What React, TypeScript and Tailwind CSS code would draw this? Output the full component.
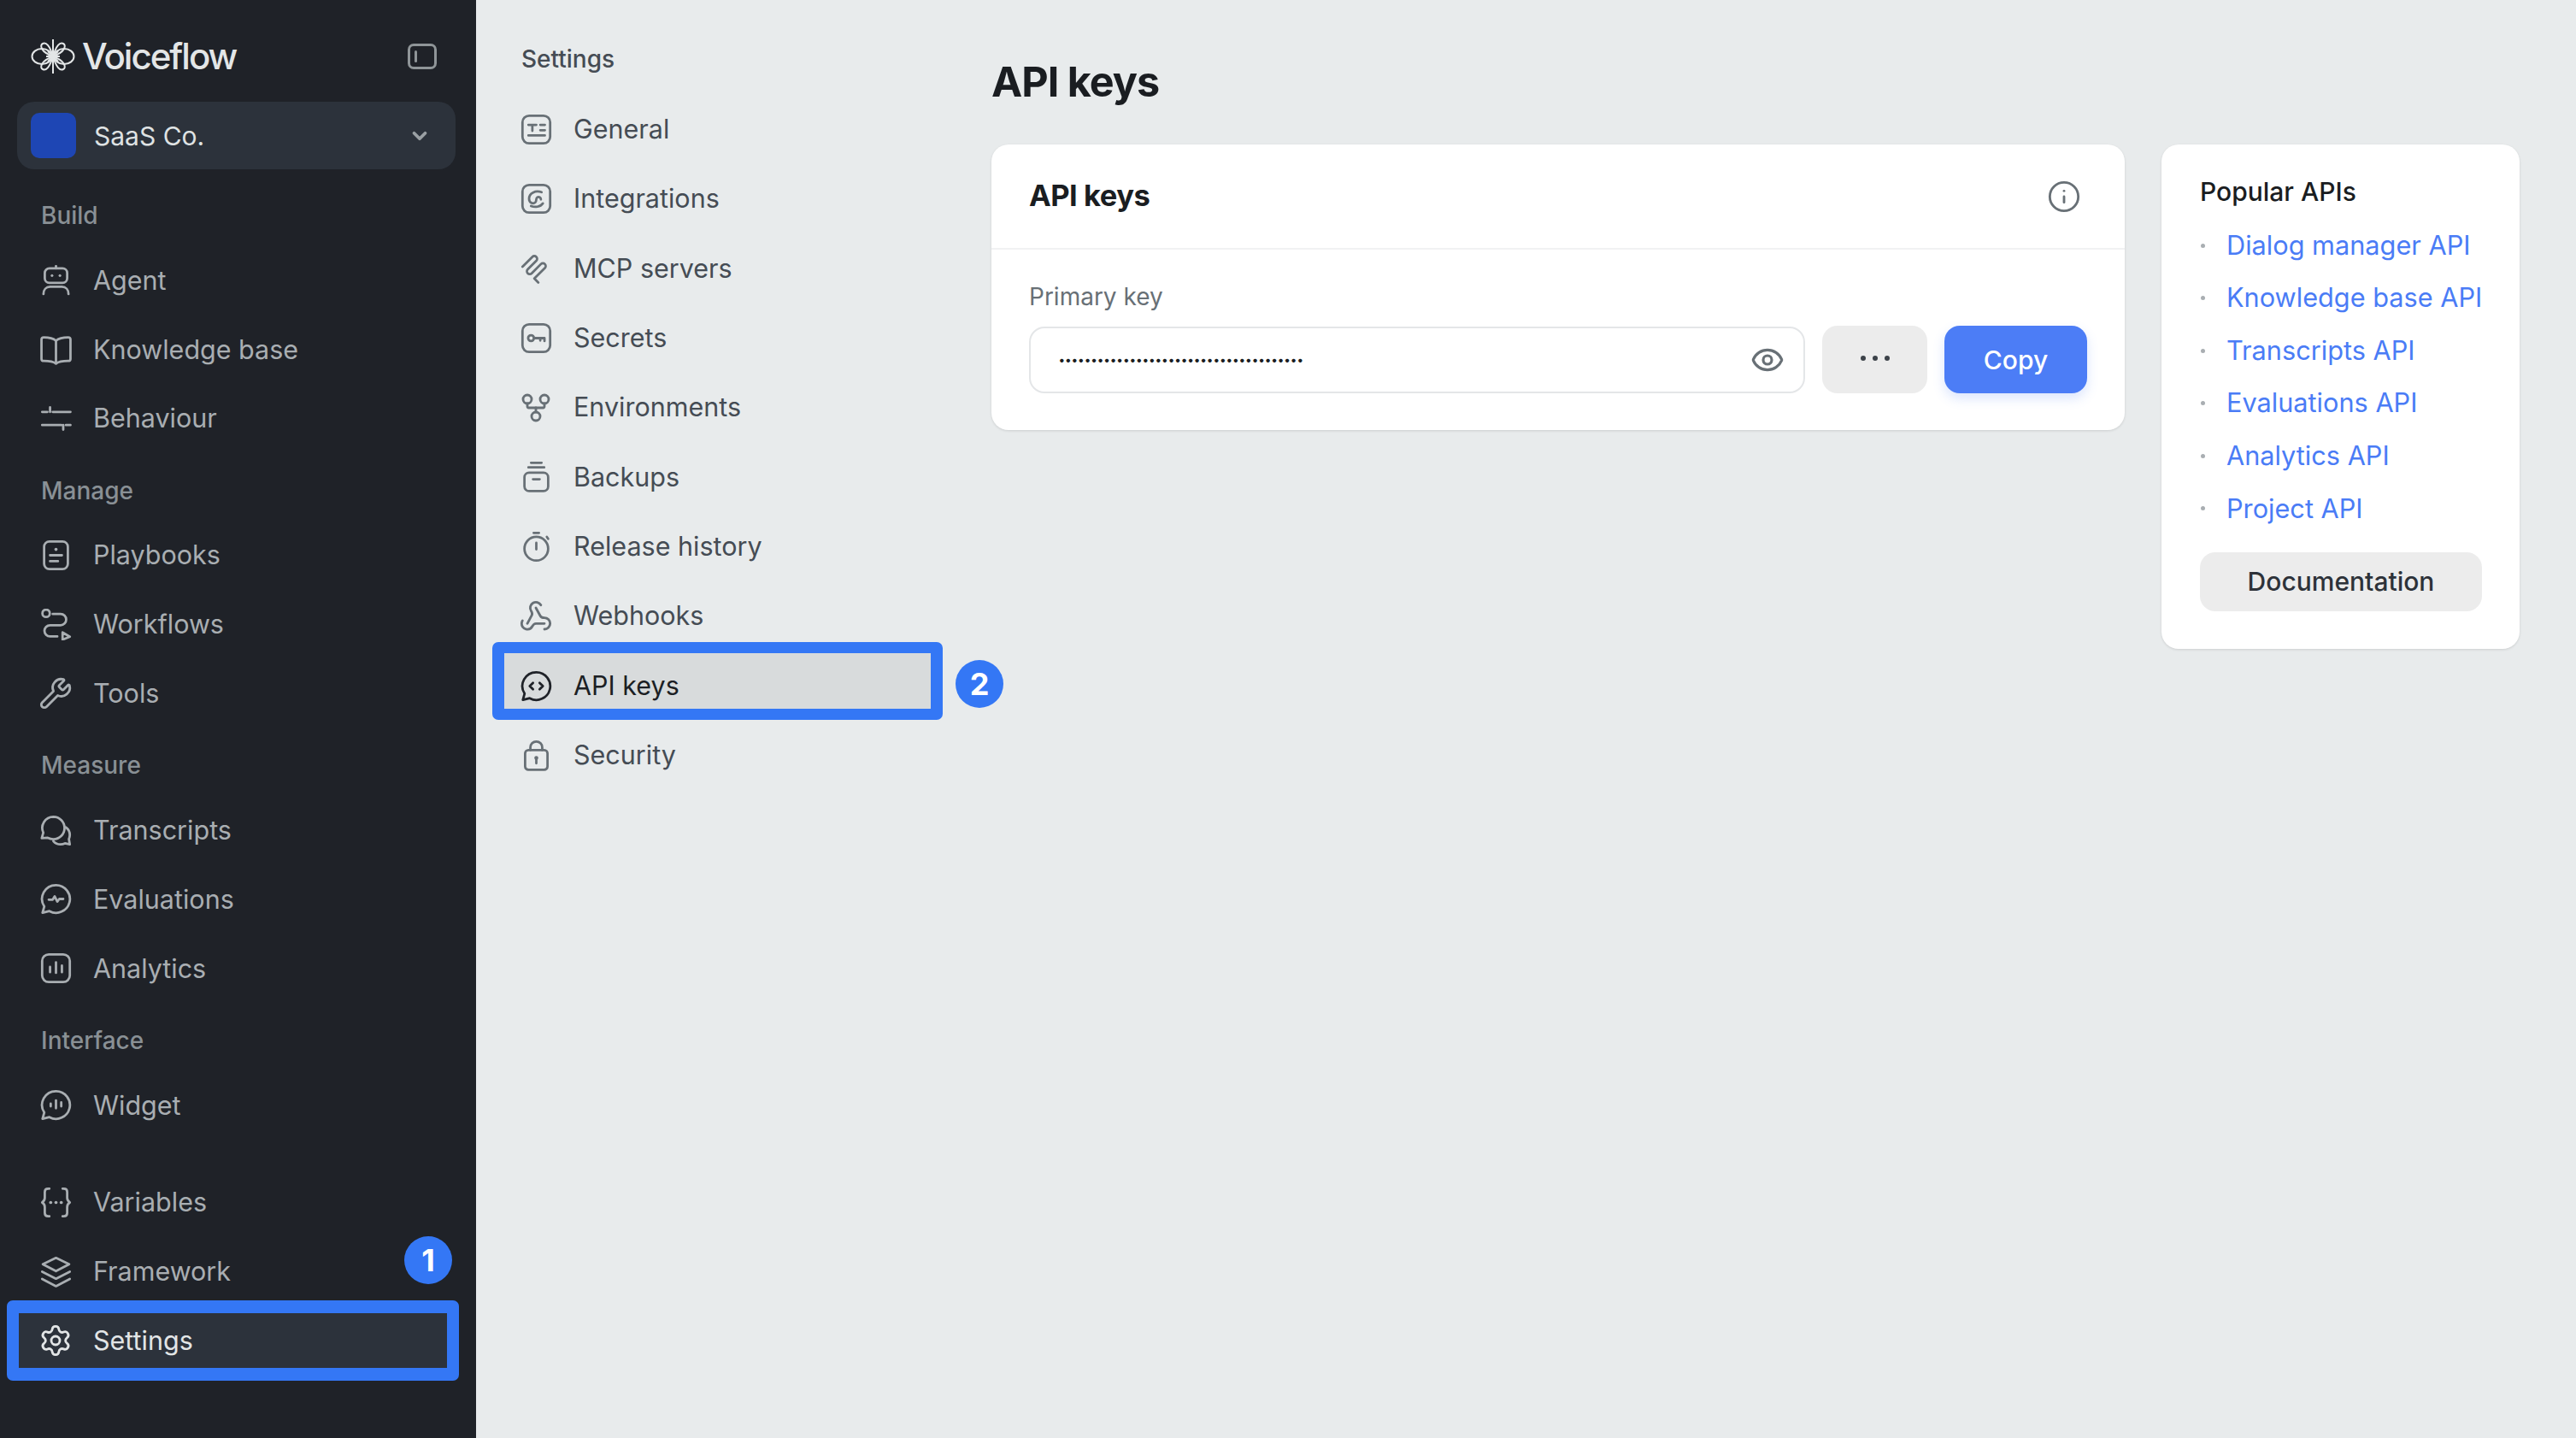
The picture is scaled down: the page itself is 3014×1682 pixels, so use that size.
import React from "react";
import { Wrench, Settings as Gear, GitFork, Webhook, Eye, Info, ChevronDown } from "lucide-react";

const S = ({ children }: { children: React.ReactNode }) => (
  <svg viewBox="0 0 24 24" fill="none" stroke="currentColor" strokeWidth={1.800} strokeLinecap="round" strokeLinejoin="round" className="w-[37px] h-[37px] -m-[1.500px] shrink-0">
    {children}
  </svg>
);
const Dot = ({ x, y, r = 1 }: { x: number; y: number; r?: number }) => <circle cx={x} cy={y} r={r} fill="currentColor" stroke="none" />;

const Agent = () => <S><rect x="3.500" y="2.500" width="17" height="11" rx="3.500" /><path d="M12 .8v1.700" /><Dot x={9} y={8} /><Dot x={15} y={8} /><path d="M2.500 22c0-3.200 2-5.500 5-5.500h9c3 0 5 2.300 5 5.500" /></S>;
const Book = () => <S><path d="M12 5.500C10 3.800 7 3 2.800 3 1.800 3 1 3.600 1 4.600v14.800c0 1 .8 1.500 1.800 1.500 4.200 0 7.200.5 9.200 2 2-1.500 5-2 9.200-2 1 0 1.800-.5 1.800-1.500V4.600c0-1-.8-1.600-1.800-1.600C17 3 14 3.800 12 5.500z" /><path d="M12 5.500V22" /></S>;
const Sliders = () => <S><path d="M1.500 7h4M9.500 7H23M7.500 3.500V7M1.500 17h14.500M19.500 17H23M17.500 17v3.500" /></S>;
const Playbook = () => <S><rect x="3" y="1.500" width="18" height="21" rx="4" /><Dot x={12} y={7.500} r={1.200} /><path d="M7.500 12h9M7.500 16.500h6" /></S>;
const Flow = () => <S><circle cx="4.500" cy="3.500" r="2.800" /><path d="M9.500 4h6a4.200 4.200 0 0 1 0 8.500H7.500a4.200 4.200 0 0 0 0 8.500h5.500" /><path d="M17 18l5.500 3.200L17 23.500z" /></S>;
const Bubbles = () => <S><path d="M10 1.500a8.500 8.500 0 0 1 8.500 8.500 8.500 8.500 0 0 1-8.500 8.500c-1.500 0-3-.4-4.200-1L1.200 17.800l1.200-4.200A8.500 8.500 0 0 1 10 1.500z" /><path d="M19.500 9.500c2 1.500 3 3.500 3 5.800 0 1.200-.3 2.200-.7 3.200l.7 4-3.700-.8c-1 .5-2 .8-3.300.8-2.200 0-4.200-1-5.500-2.500" /></S>;
const Pulse = () => <S><path d="M12 1.500a10.500 10.500 0 1 1-5 19.700L1.800 22.500l1.300-4.800A10.500 10.500 0 0 1 12 1.500z" /><path d="M6.500 12.500h3l1.500-2.500 2 4 1.500-2h3" /></S>;
const Chart = () => <S><rect x="1.500" y="1.500" width="21" height="21" rx="5" /><path d="M7.500 11v4M12 7.500v8M16.500 10v5" /></S>;
const Wave = () => <S><path d="M12 1.500a10.500 10.500 0 1 1-5 19.700L1.800 22.500l1.300-4.800A10.500 10.500 0 0 1 12 1.500z" /><path d="M8 11v2M12 8.500v6M16 10v3" /></S>;
const Braces = () => <S><path d="M7 1.500H6c-1.500 0-2.500 1-2.500 2.500v4.500c0 1.500-.8 2.800-2 3.500 1.200.7 2 2 2 3.500V20c0 1.500 1 2.500 2.500 2.500h1" /><path d="M17 1.500h1c1.500 0 2.500 1 2.500 2.500v4.500c0 1.500.8 2.800 2 3.500-1.200.7-2 2-2 3.500V20c0 1.500-1 2.500-2.500 2.500h-1" /><Dot x={8} y={12} r={1.200} /><Dot x={12} y={12} r={1.200} /><Dot x={16} y={12} r={1.200} /></S>;
const Stack = () => <S><path d="M12 1.500l10 4.800L12 11.500 2 6.300z" /><path d="M1.500 12l10.500 5.300L22.500 12" /><path d="M1.500 17.500L12 23l10.500-5.500" /></S>;
const GeneralI = () => <S><rect x="1.500" y="1.500" width="21" height="21" rx="5" /><path d="M6 8.500h6M9 8.500v4.500M15 8.500h3.500M15 12.500h3.500M6 16.500h12.500" /></S>;
const Integr = () => <S><rect x="1.500" y="1.500" width="21" height="21" rx="5" /><path d="M16 7c-4.500-1.500-9.500.5-9.500 5 0 3 3 4.300 4.700 2.800 1.300-1.200.2-3 1.500-3.900 1.200-.8 2.800.2 2.800 1.600M8 17.500c3 1.200 7 .8 9-2" /></S>;
const Mcp = () => <S><path d="M1.500 11L9 3.500a2.100 2.100 0 0 1 3 3L5.500 13a2.100 2.100 0 0 0 3 3L15.500 9a2.100 2.100 0 0 1 3 3L10.500 20l3 3" /></S>;
const Secret = () => <S><rect x="1.500" y="1.500" width="21" height="21" rx="5" /><circle cx="8" cy="12" r="2.200" /><path d="M10.200 12h8M18.200 12v2.200M15 12v1.800" /></S>;
const Backup = () => <S><path d="M8 1.500h8M6 5h12" /><rect x="3" y="9" width="18" height="14" rx="3.500" /><path d="M9.500 14h5" /></S>;
const Timer = () => <S><path d="M10 1.500h4" /><circle cx="12" cy="13.500" r="9" /><path d="M12 9v5M20 4.500l1 1.500" /></S>;
const Code = () => <S><path d="M12 1.500a10.500 10.500 0 1 1-5 19.700L1.800 22.500l1.300-4.800A10.500 10.500 0 0 1 12 1.500z" /><path d="M9.500 9.500L7 12l2.500 2.500M14.500 9.500L17 12l-2.500 2.500" /></S>;
const Lock = () => <S><rect x="3.500" y="8" width="17" height="15" rx="2.500" /><path d="M7.500 8V6a4.500 4.500 0 0 1 9 0v2" /><Dot x={12} y={14} r={1.500} /><path d="M12 14v4" /></S>;
const L = (C: React.ComponentType<any>) => () => <C className="w-[40px] h-[40px] -m-[3px] shrink-0" strokeWidth={1.700} />;
const WrenchI = L(Wrench);
const GearI = L(Gear);
const ForkI = L(GitFork);
const HookI = L(Webhook);

const Logo = () => (
  <svg viewBox="0 0 52 42" fill="none" stroke="currentColor" strokeWidth="2" className="w-[52px] h-[42px] text-[#e3e6e7]">
    <ellipse cx="13" cy="21" rx="11.500" ry="9" />
    <ellipse cx="39" cy="21" rx="11.500" ry="9" />
    <path d="M26 21C22 8 18 4 14 6c-4 2-2 10 12 15zM26 21C30 8 34 4 38 6c4 2 2 10-12 15zM26 21C22 34 18 38 14 36c-4-2-2-10 12-15zM26 21c4 13 8 17 12 15 4-2 2-10-12-15z" />
    <path d="M26 1v40M18 21h16M20 15l12 12M32 15L20 27" />
  </svg>
);

function Row({ icon: I, label, active }: { icon: React.ComponentType; label: string; active?: boolean }) {
  return (
    <div className={`relative flex items-center h-[64px] pl-[26px] gap-[27px] text-[30.500px] leading-none ${active ? "bg-[#2c323b] text-[#e2e5e6]" : "text-[#a9aeb2]"}`}>
      <I />
      <span>{label}</span>
      {active && <div className="absolute -inset-x-[14px] -inset-y-[15px] border-x-[14px] border-y-[15px] border-[#3477f5] rounded-[7px]" />}
    </div>
  );
}

function Group({ title, items }: { title: string; items: [React.ComponentType, string][] }) {
  return (
    <div className="flex flex-col">
      <div className="h-[30px] mb-[29px] pl-[26px] flex items-center text-[28px] font-medium text-[#899095] leading-none">{title}</div>
      <div className="flex flex-col gap-[16.800px]">
        {items.map(([I, t]) => <Row key={t} icon={I} label={t} />)}
      </div>
    </div>
  );
}

const settingsItems: [React.ComponentType, string][] = [
  [GeneralI, "General"], [Integr, "Integrations"], [Mcp, "MCP servers"], [Secret, "Secrets"],
  [ForkI, "Environments"], [Backup, "Backups"], [Timer, "Release history"], [HookI, "Webhooks"],
  [Code, "API keys"], [Lock, "Security"],
];

const apis = ["Dialog manager API", "Knowledge base API", "Transcripts API", "Evaluations API", "Analytics API", "Project API"];

export default function App() {
  return (
    <div className="flex w-[3014px] h-[1682px] overflow-hidden bg-[#e8ebec] [font-family:Inter,sans-serif]">
      <aside className="w-[557px] shrink-0 h-full bg-[#1f2228] flex flex-col pl-[22px] pr-[34px] pb-[82px]">
        <div className="flex items-center justify-between h-[42px] mt-[45px] pl-[14px] pr-[12px]">
          <div className="flex items-center gap-[8px]">
            <Logo />
            <span className="text-[42px] font-medium tracking-[-2px] leading-none text-[#e3e6e7]">Voiceflow</span>
          </div>
          <div className="w-[34px] h-[30px] rounded-[7px] border-[3px] border-[#8f9598] flex items-center pl-[5px]">
            <div className="w-[3px] h-[14px] bg-[#8f9598] rounded" />
          </div>
        </div>
        <div className="-ml-[2px] -mr-[10px] mt-[32px] h-[79px] rounded-[20px] bg-[#2c323b] flex items-center pl-[16px] pr-[29px]">
          <div className="w-[53px] h-[53px] rounded-[10px] bg-[#1e46b4]" />
          <span className="ml-[21px] text-[30px] leading-none text-[#dfe2e3]">SaaS Co.</span>
          <ChevronDown className="ml-auto w-[26px] h-[26px] text-[#9aa0a4]" strokeWidth={3.500} />
        </div>
        <div className="flex flex-col gap-[37px] mt-[39px]">
          <Group title="Build" items={[[Agent, "Agent"], [Book, "Knowledge base"], [Sliders, "Behaviour"]]} />
          <Group title="Manage" items={[[Playbook, "Playbooks"], [Flow, "Workflows"], [WrenchI, "Tools"]]} />
          <Group title="Measure" items={[[Bubbles, "Transcripts"], [Pulse, "Evaluations"], [Chart, "Analytics"]]} />
          <Group title="Interface" items={[[Wave, "Widget"]]} />
        </div>
        <div className="relative mt-auto flex flex-col gap-[16.800px]">
          <Row icon={Braces} label="Variables" />
          <Row icon={Stack} label="Framework" />
          <Row icon={GearI} label="Settings" active />
          <div className="absolute -right-[6px] top-[72px] w-[56px] h-[56px] rounded-full bg-[#3477f5] text-white font-bold text-[36px] flex items-center justify-center leading-none">1</div>
        </div>
      </aside>

      <nav className="w-[603px] shrink-0 pl-[33px] pt-[54px]">
        <div className="pl-[20px] h-[30px] flex items-center text-[28px] font-medium leading-none text-[#454c54]">Settings</div>
        <div className="flex flex-col gap-[17.400px] w-[499px] mt-[35px]">
          {settingsItems.map(([I, t]) => {
            const on = t === "API keys";
            return (
              <div key={t} className={`relative flex items-center h-[64px] pl-[20px] gap-[27px] text-[30.500px] leading-none ${on ? "text-[#1c1f24]" : "text-[#454c54]"}`}>
                {on && <div className="absolute -inset-x-[14px] -top-[19px] -bottom-[8px] bg-[#d8dbdc] border-x-[14px] border-y-[13px] border-[#3477f5] rounded-[7px]" />}
                <span className={`relative ${on ? "text-[#1f2228]" : "text-[#687076]"}`}><I /></span>
                <span className="relative">{t}</span>
                {on && <div className="absolute left-[528px] top-[2px] w-[56px] h-[56px] rounded-full bg-[#3477f5] text-white font-bold text-[36px] flex items-center justify-center leading-none">2</div>}
              </div>
            );
          })}
        </div>
      </nav>

      <main className="flex-1 min-w-0 pr-[66px] pt-[70px]">
        <h1 className="h-[52px] flex items-center text-[48.500px] font-bold leading-none tracking-[-1px] text-[#1a1d21]">API keys</h1>
        <div className="flex items-start gap-[43px] mt-[47px]">
          <section className="flex-1 min-w-0 h-[334px] bg-white rounded-[20px] shadow-[0_1px_3px_rgba(0,0,0,0.12)]">
            <header className="h-[123px] border-b-[2px] border-[#f1f2f3] flex items-center justify-between pl-[44px] pr-[51px]">
              <span className="text-[34.500px] font-bold tracking-[-0.5px] leading-none text-[#1a1d21]">API keys</span>
              <Info className="w-[40px] h-[40px] text-[#687076]" strokeWidth={1.700} />
            </header>
            <div className="pl-[44px] pr-[44px] pt-[40px]">
              <div className="text-[28px] leading-none h-[30px] flex items-center text-[#687076]">Primary key</div>
              <div className="flex items-center gap-[20px] mt-[19px]">
                <div className="flex-1 h-[78px] rounded-[18px] border-[2px] border-[#e4e6e8] flex items-center justify-between pl-[33px] pr-[22px]">
                  <span className="text-[14px] font-bold tracking-[0.900px] leading-none text-[#1a1d21]">{"•".repeat(38)}</span>
                  <Eye className="w-[40px] h-[40px] text-[#687076]" strokeWidth={1.900} />
                </div>
                <div className="w-[123px] h-[79px] rounded-[18px] bg-[#ececec] flex items-center justify-center gap-[8px] pb-[4px]">
                  <i className="w-[6px] h-[6px] rounded-full bg-[#3c4249]" />
                  <i className="w-[6px] h-[6px] rounded-full bg-[#3c4249]" />
                  <i className="w-[6px] h-[6px] rounded-full bg-[#3c4249]" />
                </div>
                <div className="w-[167px] h-[79px] rounded-[18px] bg-[#4c7df6] shadow-[0_6px_14px_rgba(76,125,246,0.2)] flex items-center justify-center text-[30px] font-medium leading-none text-white">Copy</div>
              </div>
            </div>
          </section>
          <aside className="w-[419px] shrink-0 h-[590px] bg-white rounded-[20px] shadow-[0_1px_3px_rgba(0,0,0,0.12)] pl-[45px] pr-[44px] pt-[40px]">
            <div className="h-[30px] flex items-center text-[30px] font-medium leading-none text-[#1a1d21]">Popular APIs</div>
            <ul className="mt-[33px] flex flex-col gap-[31.600px]">
              {apis.map(a => (
                <li key={a} className="h-[30px] flex items-center text-[30.700px] leading-none text-[#4a7cf6] whitespace-nowrap">
                  <span className="w-[5px] h-[5px] rounded-full bg-[#a9aeb2] ml-[1px] mr-[25px] shrink-0" />
                  {a}
                </li>
              ))}
            </ul>
            <div className="mt-[36px] h-[69px] rounded-[18px] bg-[#ececec] flex items-center justify-center text-[30px] font-medium leading-none text-[#2d3239]">Documentation</div>
          </aside>
        </div>
      </main>
    </div>
  );
}
